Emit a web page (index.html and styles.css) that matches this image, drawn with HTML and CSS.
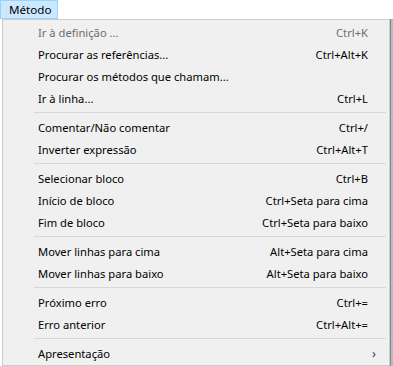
FILE: index.html
```html
<!DOCTYPE html>
<html>
<head>
    <title>Método</title>
    <meta charset="utf-8" />
    <link rel="stylesheet" href="styles.css">
</head>
<body>
    <div class="menubar">
        <span class="menu-title">Método</span>
    </div>
    <div class="workspace">
        <div class="editor-left"></div>
        <ul class="menu">
            <li class="item disabled"><span>Ir à definição ...</span><span class="key">Ctrl+K</span></li>
            <li class="item"><span>Procurar as referências...</span><span class="key">Ctrl+Alt+K</span></li>
            <li class="item"><span>Procurar os métodos que chamam...</span><span class="key"></span></li>
            <li class="item"><span>Ir à linha...</span><span class="key">Ctrl+L</span></li>
            <li class="sep"></li>
            <li class="item"><span>Comentar/Não comentar</span><span class="key">Ctrl+/</span></li>
            <li class="item"><span>Inverter expressão</span><span class="key">Ctrl+Alt+T</span></li>
            <li class="sep"></li>
            <li class="item"><span>Selecionar bloco</span><span class="key">Ctrl+B</span></li>
            <li class="item"><span>Início de bloco</span><span class="key">Ctrl+Seta para cima</span></li>
            <li class="item"><span>Fim de bloco</span><span class="key">Ctrl+Seta para baixo</span></li>
            <li class="sep"></li>
            <li class="item"><span>Mover linhas para cima</span><span class="key">Alt+Seta para cima</span></li>
            <li class="item"><span>Mover linhas para baixo</span><span class="key">Alt+Seta para baixo</span></li>
            <li class="sep"></li>
            <li class="item"><span>Próximo erro</span><span class="key">Ctrl+=</span></li>
            <li class="item"><span>Erro anterior</span><span class="key">Ctrl+Alt+=</span></li>
            <li class="sep"></li>
            <li class="item submenu"><span>Apresentação</span><span class="arrow">&#x203A;</span></li>
        </ul>
        <div class="editor-right"></div>
    </div>
</body>
</html>
```

FILE: styles.css
```css
body {
    font-family: 'Noto Sans', 'Open Sans', sans-serif;
    font-size: 11.2px;
    margin: 0;
    padding: 0;
    background-color: #fff;
    color: #000;
    height: 366px;
    overflow: hidden;
}
.menubar {
    height: 19px;
    background-color: #fff;
}
.menu-title {
    display: inline-block;
    box-sizing: border-box;
    height: 19px;
    width: 58px;
    line-height: 17px;
    padding-left: 8px;
    font-size: 11.6px;
    background-color: #cce8ff;
    border: 1px solid #99d1ff;
}
.workspace {
    display: flex;
    height: 347px;
}
.editor-left {
    width: 2px;
    background-color: #fff;
}
.editor-right {
    flex: 1;
    border-left: 1px solid #888;
    background-color: #b4bcc4;
}
.menu {
    list-style: none;
    margin: 0;
    padding: 1px 2px;
    width: 382px;
    background-color: #f0f0f0;
    border: 1px solid #ccc;
}
.item {
    display: flex;
    justify-content: space-between;
    align-items: center;
    height: 22px;
    padding: 0 19px 0 33px;
}
.item.disabled {
    color: #6d6d6d;
}
.sep {
    height: 1px;
    margin: 3px 1px 3px 29px;
    background-color: #d7d7d7;
}
.arrow {
    margin-right: -8px;
    font-size: 13px;
    color: #444;
}
```
